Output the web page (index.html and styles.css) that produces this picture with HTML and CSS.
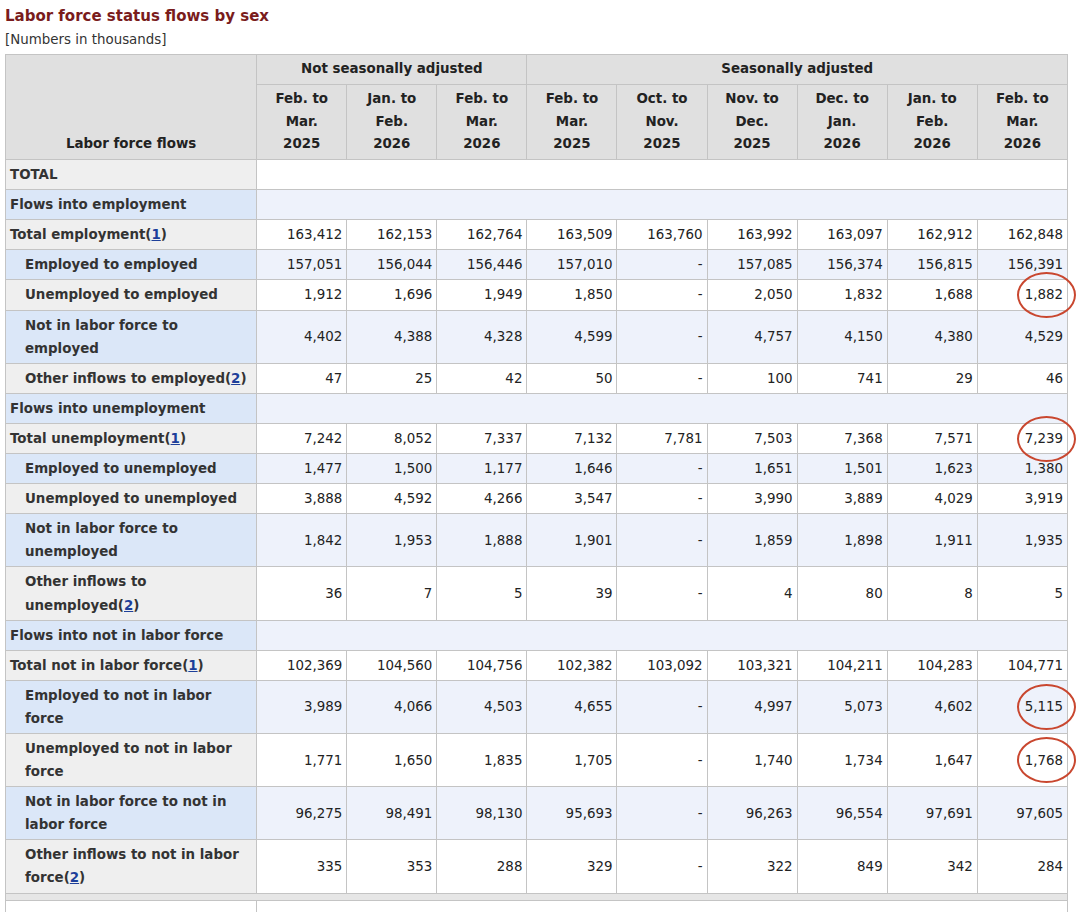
FILE: index.html
```html
<!DOCTYPE html>
<html lang="en">
<head>
<meta charset="utf-8">
<title>Labor force status flows by sex</title>
<link rel="stylesheet" href="styles.css">
</head>
<body>
<h3 class="title">Labor force status flows by sex</h3>
<p class="note">[Numbers in thousands]</p>
<table class="flows">
<colgroup>
<col class="c-label"><col class="c-num"><col class="c-num"><col class="c-num"><col class="c-num"><col class="c-num"><col class="c-num"><col class="c-num"><col class="c-num"><col class="c-num">
</colgroup>
<thead>
<tr class="h1"><th rowspan="2" class="stub">Labor force flows</th><th colspan="3">Not seasonally adjusted</th><th colspan="6">Seasonally adjusted</th></tr>
<tr class="h2">
<th>Feb. to<br>Mar.<br>2025</th><th>Jan. to<br>Feb.<br>2026</th><th>Feb. to<br>Mar.<br>2026</th>
<th>Feb. to<br>Mar.<br>2025</th><th>Oct. to<br>Nov.<br>2025</th><th>Nov. to<br>Dec.<br>2025</th><th>Dec. to<br>Jan.<br>2026</th><th>Jan. to<br>Feb.<br>2026</th><th>Feb. to<br>Mar.<br>2026</th>
</tr>
</thead>
<tbody>
<tr class="g"><th class="lab">TOTAL</th><td colspan="9"></td></tr>
<tr class="b"><th class="lab">Flows into employment</th><td colspan="9"></td></tr>
<tr class="g"><th class="lab">Total employment(<a href="#n1">1</a>)</th><td>163,412</td><td>162,153</td><td>162,764</td><td>163,509</td><td>163,760</td><td>163,992</td><td>163,097</td><td>162,912</td><td>162,848</td></tr>
<tr class="b"><th class="lab sub">Employed to employed</th><td>157,051</td><td>156,044</td><td>156,446</td><td>157,010</td><td>-</td><td>157,085</td><td>156,374</td><td>156,815</td><td>156,391</td></tr>
<tr class="g"><th class="lab sub">Unemployed to employed</th><td>1,912</td><td>1,696</td><td>1,949</td><td>1,850</td><td>-</td><td>2,050</td><td>1,832</td><td>1,688</td><td class="mark">1,882<span class="ring"></span></td></tr>
<tr class="b"><th class="lab sub">Not in labor force to employed</th><td>4,402</td><td>4,388</td><td>4,328</td><td>4,599</td><td>-</td><td>4,757</td><td>4,150</td><td>4,380</td><td>4,529</td></tr>
<tr class="g"><th class="lab sub">Other inflows to employed(<a href="#n2">2</a>)</th><td>47</td><td>25</td><td>42</td><td>50</td><td>-</td><td>100</td><td>741</td><td>29</td><td>46</td></tr>
<tr class="b"><th class="lab">Flows into unemployment</th><td colspan="9"></td></tr>
<tr class="g"><th class="lab">Total unemployment(<a href="#n1">1</a>)</th><td>7,242</td><td>8,052</td><td>7,337</td><td>7,132</td><td>7,781</td><td>7,503</td><td>7,368</td><td>7,571</td><td class="mark">7,239<span class="ring"></span></td></tr>
<tr class="b"><th class="lab sub">Employed to unemployed</th><td>1,477</td><td>1,500</td><td>1,177</td><td>1,646</td><td>-</td><td>1,651</td><td>1,501</td><td>1,623</td><td>1,380</td></tr>
<tr class="g"><th class="lab sub">Unemployed to unemployed</th><td>3,888</td><td>4,592</td><td>4,266</td><td>3,547</td><td>-</td><td>3,990</td><td>3,889</td><td>4,029</td><td>3,919</td></tr>
<tr class="b"><th class="lab sub">Not in labor force to unemployed</th><td>1,842</td><td>1,953</td><td>1,888</td><td>1,901</td><td>-</td><td>1,859</td><td>1,898</td><td>1,911</td><td>1,935</td></tr>
<tr class="g"><th class="lab sub">Other inflows to unemployed(<a href="#n2">2</a>)</th><td>36</td><td>7</td><td>5</td><td>39</td><td>-</td><td>4</td><td>80</td><td>8</td><td>5</td></tr>
<tr class="b"><th class="lab">Flows into not in labor force</th><td colspan="9"></td></tr>
<tr class="g"><th class="lab">Total not in labor force(<a href="#n1">1</a>)</th><td>102,369</td><td>104,560</td><td>104,756</td><td>102,382</td><td>103,092</td><td>103,321</td><td>104,211</td><td>104,283</td><td>104,771</td></tr>
<tr class="b"><th class="lab sub">Employed to not in labor force</th><td>3,989</td><td>4,066</td><td>4,503</td><td>4,655</td><td>-</td><td>4,997</td><td>5,073</td><td>4,602</td><td class="mark">5,115<span class="ring"></span></td></tr>
<tr class="g"><th class="lab sub">Unemployed to not in labor force</th><td>1,771</td><td>1,650</td><td>1,835</td><td>1,705</td><td>-</td><td>1,740</td><td>1,734</td><td>1,647</td><td class="mark">1,768<span class="ring"></span></td></tr>
<tr class="b"><th class="lab sub">Not in labor force to not in labor force</th><td>96,275</td><td>98,491</td><td>98,130</td><td>95,693</td><td>-</td><td>96,263</td><td>96,554</td><td>97,691</td><td>97,605</td></tr>
<tr class="g"><th class="lab sub">Other inflows to not in labor force(<a href="#n2">2</a>)</th><td>335</td><td>353</td><td>288</td><td>329</td><td>-</td><td>322</td><td>849</td><td>342</td><td>284</td></tr>
<tr class="spacer"><td colspan="10"></td></tr>
<tr class="next"><th class="lab"></th><td colspan="9"></td></tr>
</tbody>
</table>
</body>
</html>
```
FILE: styles.css
```css
html, body {
  margin: 0;
  padding: 0;
  background: #ffffff;
}
body {
  padding: 5px 0 0 5px;
  font-family: "DejaVu Sans", Verdana, sans-serif;
  color: #333333;
  overflow: hidden;
}
.title {
  margin: 0;
  font-size: 15px;
  line-height: 22px;
  font-weight: bold;
  color: #7a1c1c;
}
.note {
  margin: 2px 0 3px 0;
  font-size: 13.4px;
  line-height: 22px;
  color: #333333;
}
.flows {
  border-collapse: collapse;
  table-layout: fixed;
  width: 1063px;
  font-size: 13.4px;
  line-height: 23.1px;
}
.c-label { width: 251px; }
.c-num { width: 90px; }
.flows th, .flows td {
  border: 1px solid #c4c4c4;
  padding: 3px 4px 3px 4px;
}
.flows thead th {
  background: #e0e0e0;
  font-weight: bold;
  text-align: center;
  vertical-align: middle;
  color: #222222;
  line-height: 22.7px;
}
.flows thead .stub {
  vertical-align: bottom;
  padding-bottom: 4px;
}
.flows .h1 th { padding-top: 3px; padding-bottom: 3px; height: 23px; }
.flows .h2 th { padding-top: 3px; padding-bottom: 3px; }
.flows tbody td {
  text-align: right;
  vertical-align: middle;
  white-space: nowrap;
  color: #222222;
}
.flows .lab {
  text-align: left;
  font-weight: bold;
  padding-left: 4px;
  color: #333333;
}
.flows .lab.sub { padding-left: 19px; }
.flows .g .lab { background: #efefef; }
.flows .g td { background: #ffffff; }
.flows .b .lab { background: #dbe7f8; }
.flows .b td { background: #eef2fb; }
.flows a {
  color: #1d3f9a;
  text-decoration: underline;
}
.flows .spacer td {
  background: #e6e6e6;
  height: 6px;
  padding: 0;
}
.flows .next .lab { background: #ffffff; height: 23px; }
.flows .next td { background: #ffffff; }
.mark { position: relative; }
.ring {
  position: absolute;
  left: 39px;
  top: calc(50% - 23px);
  width: 55px;
  height: 42px;
  border: 2px solid #c9472f;
  border-radius: 50%;
  pointer-events: none;
}
```
